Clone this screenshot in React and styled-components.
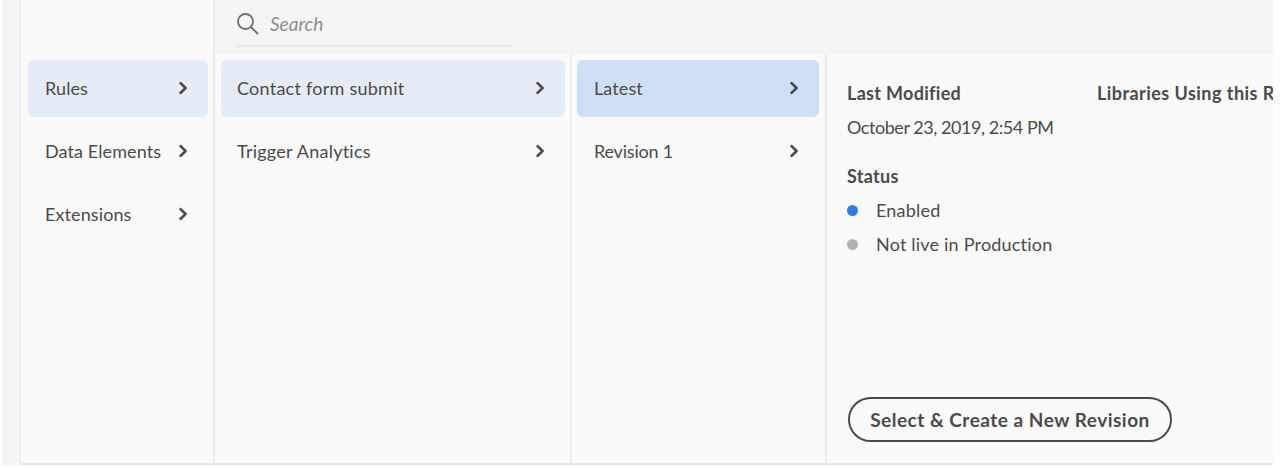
import React from "react";
import styled, { createGlobalStyle } from "styled-components";

const GlobalStyle = createGlobalStyle`
  html, body {
    margin: 0;
    padding: 0;
    background: #fff;
    overflow: hidden;
  }
  body {
    font-family: "Lato", "Open Sans", sans-serif;
    color: #4b4b4b;
  }
`;

const Page = styled.div`
  width: 1280px;
  height: 465px;
  padding-left: 2px;
  box-sizing: border-box;
  overflow: hidden;
`;

const Shell = styled.div`
  width: 1271px;
  height: 465px;
  background: #f5f5f5;
  padding-left: 18px;
  box-sizing: border-box;
`;

const Frame = styled.div`
  height: 465px;
  width: 1253px;
  box-sizing: border-box;
  display: flex;
  overflow: hidden;
  background: #fafafa;
  border-left: 1px solid #e8e8e8;
  border-bottom: 2px solid #e8e8e8;
`;

const NavColumn = styled.div`
  width: 194px;
  flex: none;
  box-sizing: border-box;
  border-right: 2px solid #ececec;
  padding: 60px 5px 0 7px;
`;

const Main = styled.div`
  flex: 1;
  min-width: 0;
  display: flex;
  flex-direction: column;
`;

const SearchBar = styled.div`
  height: 54px;
  flex: none;
  background: #f5f5f5;
  padding-left: 22px;
`;

const SearchField = styled.div`
  width: 274px;
  height: 47px;
  box-sizing: border-box;
  border-bottom: 2px solid #e9e9e9;
  display: flex;
  align-items: center;
  gap: 11px;
  padding-top: 2px;
  color: #6e6e6e;
`;

const SearchText = styled.span`
  font-size: 19px;
  font-style: italic;
  color: #8f8f8f;
`;

const Columns = styled.div`
  flex: 1;
  display: flex;
  min-height: 0;
`;

const ListColumn = styled.div`
  flex: none;
  width: ${(p) => p.$width}px;
  box-sizing: border-box;
  border-right: 2px solid #ececec;
  padding: 6px ${(p) => p.$right}px 0 ${(p) => p.$left}px;
`;

const Row = styled.div`
  height: 57px;
  margin-bottom: 6px;
  box-sizing: border-box;
  border-radius: 6px;
  display: flex;
  align-items: center;
  justify-content: space-between;
  padding: 0 20px 2px ${(p) => p.$indent}px;
  font-size: 18px;
  letter-spacing: ${(p) => p.$tracking}px;
  color: #4b4b4b;
  white-space: nowrap;
  background: ${(p) =>
    p.$state === "active" ? "#cfdff5" : p.$state === "open" ? "#e5ecf6" : "transparent"};
`;

const Details = styled.div`
  flex: 1;
  min-width: 0;
  overflow: hidden;
  display: flex;
  flex-direction: column;
  padding: 27px 0 21px 20px;
`;

const DetailTop = styled.div`
  display: flex;
`;

const InfoBlock = styled.div`
  flex: none;
  width: ${(p) => p.$width}px;
  white-space: nowrap;
`;

const Label = styled.div`
  font-size: 18px;
  line-height: 24px;
  font-weight: 700;
  letter-spacing: ${(p) => p.$tracking ?? 0.3}px;
  color: #4b4b4b;
  margin-bottom: ${(p) => p.$gap || 0}px;
`;

const Value = styled.div`
  font-size: 18px;
  line-height: 24px;
  letter-spacing: -0.45px;
  color: #4b4b4b;
`;

const StatusBlock = styled.div`
  margin-top: 25px;
  display: flex;
  flex-direction: column;
`;

const StatusRow = styled.div`
  height: 34px;
  display: flex;
  align-items: center;
  gap: 18px;
  font-size: 18px;
  letter-spacing: 0.2px;
  color: #4b4b4b;
`;

const Dot = styled.span`
  width: 11px;
  height: 11px;
  border-radius: 50%;
  flex: none;
  background: ${(p) => (p.$on ? "#2d7fe3" : "#b3b3b3")};
`;

const Button = styled.button`
  margin-top: auto;
  margin-left: 1px;
  align-self: flex-start;
  height: 45px;
  width: 324px;
  box-sizing: border-box;
  border: 2px solid #4b4b4b;
  border-radius: 23px;
  background: transparent;
  font-family: inherit;
  font-size: 19px;
  font-weight: 700;
  letter-spacing: 0.5px;
  color: #4b4b4b;
  padding: 0;
`;

const Chevron = () => (
  <svg width="10" height="14" viewBox="0 0 10 14" fill="none">
    <path d="M1.8 1.4 L7.6 7 L1.8 12.6" stroke="#4b4b4b" strokeWidth="2.6" strokeLinejoin="round" />
  </svg>
);

const SearchIcon = () => (
  <svg width="22" height="22" viewBox="0 0 22 22" fill="none" stroke="#6e6e6e" strokeWidth="1.8">
    <circle cx="8.5" cy="8.5" r="7.5" />
    <path d="M14 14 L20.5 20.5" strokeLinecap="round" />
  </svg>
);

const Item = ({ state, indent = 17, tracking = 0.1, children }) => (
  <Row $state={state} $indent={indent} $tracking={tracking}>
    <span>{children}</span>
    <Chevron />
  </Row>
);

export default function App() {
  return (
    <>
      <GlobalStyle />
      <Page>
        <Shell>
          <Frame>
            <NavColumn>
              <Item state="open">Rules</Item>
              <Item>Data Elements</Item>
              <Item>Extensions</Item>
            </NavColumn>
            <Main>
              <SearchBar>
                <SearchField>
                  <SearchIcon />
                  <SearchText>Search</SearchText>
                </SearchField>
              </SearchBar>
              <Columns>
                <ListColumn $width={357} $left={6} $right={5}>
                  <Item state="open" indent={16} tracking={0.25}>Contact form submit</Item>
                  <Item indent={16} tracking={0.25}>Trigger Analytics</Item>
                </ListColumn>
                <ListColumn $width={255} $left={5} $right={6}>
                  <Item state="active" tracking={0.1}>Latest</Item>
                  <Item tracking={-0.2}>Revision 1</Item>
                </ListColumn>
                <Details>
                  <DetailTop>
                    <InfoBlock $width={250}>
                      <Label $gap={10}>Last Modified</Label>
                      <Value>October 23, 2019, 2:54 PM</Value>
                    </InfoBlock>
                    <InfoBlock $width={300}>
                      <Label $tracking={0.45}>Libraries Using this Revision</Label>
                    </InfoBlock>
                  </DetailTop>
                  <StatusBlock>
                    <Label $gap={5}>Status</Label>
                    <StatusRow>
                      <Dot $on />
                      Enabled
                    </StatusRow>
                    <StatusRow>
                      <Dot />
                      Not live in Production
                    </StatusRow>
                  </StatusBlock>
                  <Button>Select &amp; Create a New Revision</Button>
                </Details>
              </Columns>
            </Main>
          </Frame>
        </Shell>
      </Page>
    </>
  );
}
